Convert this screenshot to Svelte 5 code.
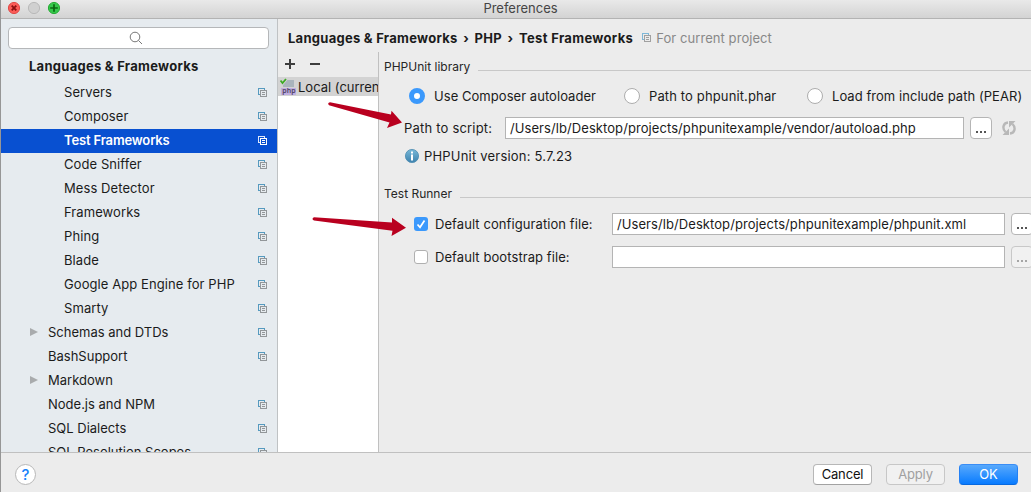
<script>
  const tree = [
    { label: 'Servers', depth: 2, scoped: true },
    { label: 'Composer', depth: 2, scoped: true },
    { label: 'Test Frameworks', depth: 2, scoped: true, selected: true },
    { label: 'Code Sniffer', depth: 2, scoped: true },
    { label: 'Mess Detector', depth: 2, scoped: true },
    { label: 'Frameworks', depth: 2, scoped: true },
    { label: 'Phing', depth: 2, scoped: true },
    { label: 'Blade', depth: 2, scoped: true },
    { label: 'Google App Engine for PHP', depth: 2, scoped: true },
    { label: 'Smarty', depth: 2, scoped: true },
    { label: 'Schemas and DTDs', depth: 1, scoped: true, expandable: true },
    { label: 'BashSupport', depth: 1, scoped: true },
    { label: 'Markdown', depth: 1, expandable: true },
    { label: 'Node.js and NPM', depth: 1, scoped: true },
    { label: 'SQL Dialects', depth: 1, scoped: true },
    { label: 'SQL Resolution Scopes', depth: 1, scoped: true }
  ];
  const loaders = ['Use Composer autoloader', 'Path to phpunit.phar', 'Load from include path (PEAR)'];
</script>

{#snippet scopeIcon(back, front)}
  <svg class="scope" width="10" height="10" viewBox="0 0 10 10" fill="none" shape-rendering="crispEdges">
    <path d="M2.5 6.5H.5V.5H6.5V2" stroke={back} />
    <path d="M2.5 2.5H8.5V8.5H2.5ZM4 4.5H7M4 6.5H7" stroke={front} />
  </svg>
{/snippet}

<div class="window">
  <header class="titlebar">
    <div class="lights">
      <svg width="54" height="14" viewBox="0 0 54 14">
        <circle cx="7" cy="7" r="5.6" fill="#fc5b57" stroke="#df4a46" />
        <path d="M4.700 4.700l4.600 4.600M9.300 4.700L4.700 9.300" stroke="#8b1010" stroke-width="1.800" />
        <circle cx="27" cy="7" r="5.6" fill="#d0d0d0" stroke="#b9b9b9" />
        <circle cx="47" cy="7" r="5.6" fill="#34c84a" stroke="#27aa35" />
        <path d="M43.200 7h7.600M47 3.200v7.600" stroke="#0a6512" stroke-width="1.700" />
      </svg>
    </div>
    <span class="title">Preferences</span>
  </header>

  <div class="body">
    <aside class="sidebar">
      <div class="search">
        <svg width="14" height="14" viewBox="0 0 14 14" fill="none" stroke="#777">
          <circle cx="6" cy="6" r="4.8" /><path d="M9.5 9.5L13 13" />
        </svg>
      </div>
      <div class="group">Languages &amp; Frameworks</div>
      <ul class="tree">
        {#each tree as item}
          <li class:selected={item.selected} class:deep={item.depth === 2}>
            <span class="twist">
              {#if item.expandable}
                <svg width="8" height="8" viewBox="0 0 8 8"><path d="M0 0L8 4L0 8Z" fill="#a9abad" /></svg>
              {/if}
            </span>
            <span class="name">{item.label}</span>
            {#if item.scoped}
              {@render scopeIcon(item.selected ? '#dfe8fa' : '#569abf', item.selected ? '#fff' : '#929699')}
            {/if}
          </li>
        {/each}
      </ul>
    </aside>

    <main class="content">
      <div class="crumbs">
        <b class="c1">Languages &amp; Frameworks</b><b class="sep">›</b><b>PHP</b><b class="sep">›</b><b class="c3">Test Frameworks</b>
        <span class="project">{@render scopeIcon('#7fb8d8', '#a0a0a0')}<span>For current project</span></span>
      </div>
      <div class="split">
        <section class="configs">
          <div class="tools">
            <svg width="36" height="12" viewBox="0 0 36 12" stroke="#3d3d3d" stroke-width="2">
              <path d="M0 6H10M5 1V11M25 6H35" shape-rendering="crispEdges" />
            </svg>
          </div>
          <div class="config">
            <svg width="16" height="18" viewBox="0 0 16 18">
              <rect x="3" y="2" width="11" height="7" fill="#a9b4bc" />
              <rect x="1" y="10" width="15" height="7" fill="#bfaee0" />
              <path d="M0.5 2.5L2.5 5L6 1" fill="none" stroke="#d3d3d3" stroke-width="3.5" />
              <path d="M0.5 2.5L2.5 5L6 1" fill="none" stroke="#3cab24" stroke-width="1.8" />
              <text x="2.300" y="15.300" class="badge">php</text>
            </svg>
            <span>Local (curren</span>
          </div>
          <div class="blank"></div>
        </section>

        <section class="form">
          <div class="legend library"><span>PHPUnit library</span><i></i></div>
          <div class="radios">
            {#each loaders as name, i}
              <label class="r{i}"><span class="radio" class:on={i === 0}></span><span>{name}</span></label>
            {/each}
          </div>
          <div class="row script">
            <span class="label">Path to script:</span>
            <div class="field">/Users/lb/Desktop/projects/phpunitexample/vendor/autoload.php</div>
            <div class="more"><u></u><u></u><u></u></div>
            <svg class="refresh" width="14" height="14" viewBox="0 0 14 14">
              <path d="M6 1.500C1 2 0 7.500 3.500 11M8 12.500C13 12 14 6.500 10.500 3" fill="none" stroke="#b8b8b8" stroke-width="2.400" />
              <path d="M.5 14H7V7.500ZM13.500 0H7V6.500Z" fill="#b8b8b8" />
            </svg>
          </div>
          <div class="version">
            <svg width="16" height="16" viewBox="0 0 16 16">
              <defs><linearGradient id="info" x2="0" y2="1"><stop stop-color="#78b8d8" /><stop offset="1" stop-color="#3d82ae" /></linearGradient></defs>
              <circle cx="8" cy="8" r="6.600" fill="url(#info)" stroke="#4b8cb0" stroke-width=".8" />
              <path d="M7 3.500h2v2H7zM7 6.500h2v6H7z" fill="#fff" />
            </svg>
            <span>PHPUnit version: 5.7.23</span>
          </div>
          <div class="legend runner"><span>Test Runner</span><i></i></div>
          <div class="row file">
            <span class="check on"><svg width="14" height="14" viewBox="0 0 14 14" fill="none" stroke="#fff" stroke-width="1.700"><path d="M3.500 7.500L6 10.300L10.500 3.500" /></svg></span>
            <span class="label conf">Default configuration file:</span>
            <div class="field xml">/Users/lb/Desktop/projects/phpunitexample/phpunit.xml</div>
            <div class="more"><u></u><u></u><u></u></div>
          </div>
          <div class="row file">
            <span class="check"></span>
            <span class="label boot">Default bootstrap file:</span>
            <div class="field"></div>
            <div class="more off"><u></u><u></u><u></u></div>
          </div>
        </section>
      </div>
    </main>
  </div>

  <footer class="footer">
    <div class="help">?</div>
    <div class="btn">Cancel</div>
    <div class="btn disabled">Apply</div>
    <div class="btn primary">OK</div>
  </footer>

  <svg class="arrows" width="1031" height="492" viewBox="0 0 1031 492" fill="#b9001f">
    <path d="M330 102.300L391 114.500L391.500 110.800L402 122.500L387 128L389.500 122.500L329 105.200Q327 103 330 102.300Z" />
    <path d="M314 217.300L392 222.500L392 217.800L406 227.800L391.500 236L392.500 230.800L314 220.500Q311 219 314 217.300Z" />
  </svg>
</div>

<style>
  :global(body) { margin: 0; overflow: hidden; }
  .window { position: relative; display: flex; flex-direction: column; box-sizing: border-box; width: 1031px; height: 492px; overflow: hidden; border-left: 1px solid #969696; background: #ececec; color: #1b1b1b; font: 13px/16px Inter, sans-serif; white-space: nowrap; }
  .window * { box-sizing: border-box; }
  svg { display: block; flex: none; }
  .titlebar { position: relative; flex: none; height: 19px; border-bottom: 1px solid #b3b3b3; background: linear-gradient(#e9e9e9, #d3d3d3); text-align: center; color: #454545; }
  .title { display: block; padding-left: 9px; line-height: 17px; letter-spacing: -.02px; }
  .lights { position: absolute; left: 6px; top: 1px; }
  .body { display: flex; flex: none; height: 433px; }
  .sidebar { flex: none; width: 277px; overflow: hidden; padding-top: 8px; border-right: 1px solid #bfc2c4; background: #e6ebef; }
  .search { display: flex; align-items: center; justify-content: center; width: 261px; height: 22px; margin-left: 7px; padding-right: 5px; border: 1px solid #b5b7b9; border-radius: 4px; background: #fff; }
  .group { height: 32px; padding: 9px 0 0 28px; font-weight: 700; letter-spacing: .27px; }
  .tree { margin: 0; padding: 0; list-style: none; }
  .tree li { display: flex; align-items: center; height: 24px; padding: 0 9px 2px 29px; letter-spacing: 0; }
  .tree li.deep { padding-left: 45px; letter-spacing: .08px; }
  .tree li.selected { background: #0850d1; color: #fff; font-weight: 600; letter-spacing: -.15px; }
  .twist { flex: none; width: 18px; }
  .name { flex: 1; }
  .tree .scope { position: relative; top: 1px; }
  .content { flex: 1; min-width: 0; display: flex; flex-direction: column; }
  .crumbs { display: flex; align-items: center; flex: none; height: 33px; padding: 5px 0 0 10px; letter-spacing: .27px; }
  .c3 { letter-spacing: .34px; }
  .sep { width: 17px; text-align: center; }
  .project { display: flex; align-items: center; gap: 4px; margin-left: 9px; color: #888; letter-spacing: .07px; }
  .split { flex: 1; min-height: 0; display: flex; }
  .configs { flex: none; width: 101px; display: flex; flex-direction: column; border-right: 1px solid #c0c0c0; overflow: hidden; }
  .tools { height: 25px; padding: 6px 0 0 7px; }
  .config { display: flex; align-items: center; height: 19px; padding-left: 2px; gap: 2px; background: #d3d3d3; }
  .badge { font: 600 7px "Noto Sans", sans-serif; fill: #4f4564; }
  .blank { flex: 1; background: #fff; }
  .form { flex: 1; min-width: 0; overflow: hidden; }
  .legend { display: flex; align-items: center; height: 16px; padding-left: 5px; font-size: 12px; color: #262626; }
  .legend i { flex: 1; height: 1px; margin: 6px 0 0 8px; background: #c8c8c8; }
  .library { margin-top: 7px; }
  .radios { display: flex; height: 16px; margin-top: 13px; padding-left: 30px; letter-spacing: .05px; }
  .radios label { display: flex; gap: 9px; }
  .r0 { width: 215px; } .r1 { width: 183px; letter-spacing: .13px; }
  .radio { width: 16px; height: 16px; border: 1px solid #adadad; border-radius: 50%; background: #fff; }
  .radio.on { border: 5px solid #3b99fc; }
  .row { display: flex; align-items: center; height: 22px; }
  .script { margin-top: 13px; padding-left: 25px; }
  .script .label { width: 101px; letter-spacing: .2px; }
  .field { flex: none; width: 459px; height: 22px; margin-right: 6px; padding: 2px 0 0 4px; border: 1px solid #b4b4b4; background: #fff; letter-spacing: .075px; }
  .more { flex: none; display: flex; align-items: flex-end; justify-content: center; gap: 2px; width: 22px; height: 22px; padding-bottom: 5px; border: 1px solid #b5b5b5; border-radius: 4px; background: #fff; }
  .more u { width: 2px; height: 2px; background: #555; }
  .more.off { background: #f1f1f1; border-color: #c8c8c8; }
  .more.off u { background: #a5a5a5; }
  .refresh { margin-left: 10px; }
  .version { display: flex; align-items: center; gap: 4px; height: 16px; margin: 9px 0 0 25px; letter-spacing: .2px; }
  .runner { margin-top: 22px; }
  .file { margin: 11px 0 0 35px; }
  .check { flex: none; width: 14px; height: 14px; margin-right: 7px; border: 1px solid #b0b0b0; border-radius: 3px; background: #fff; }
  .check.on { border: 0; background: #3b99fc; }
  .file .label { flex: none; width: 177px; letter-spacing: .08px; }
  .file .field { width: 393px; }
  .footer { display: flex; align-items: center; flex: none; height: 40px; padding: 4px 13px 0 14px; gap: 14px; border-top: 1px solid #c0c0c0; }
  .help { width: 21px; height: 21px; margin-right: auto; border: 1px solid #b8b8b8; border-radius: 50%; background: #fff; color: #1681fb; font-size: 15px; font-weight: 500; line-height: 19px; text-align: center; }
  .btn { width: 59px; height: 21px; border: 1px solid #b7b7b7; border-bottom-color: #a2a2a2; border-radius: 4px; background: #fff; line-height: 19px; text-align: center; color: #111; letter-spacing: -.15px; }
  .btn.disabled { border-color: #c7c7c7; background: #f1f1f1; color: #a0a0a0; }
  .btn.primary { border-color: #3a8df5 #2380f4 #0869df; background: linear-gradient(#58a9fc, #087bff); color: #fff; }
  .arrows { position: absolute; left: -1px; top: 0; pointer-events: none; }
</style>
